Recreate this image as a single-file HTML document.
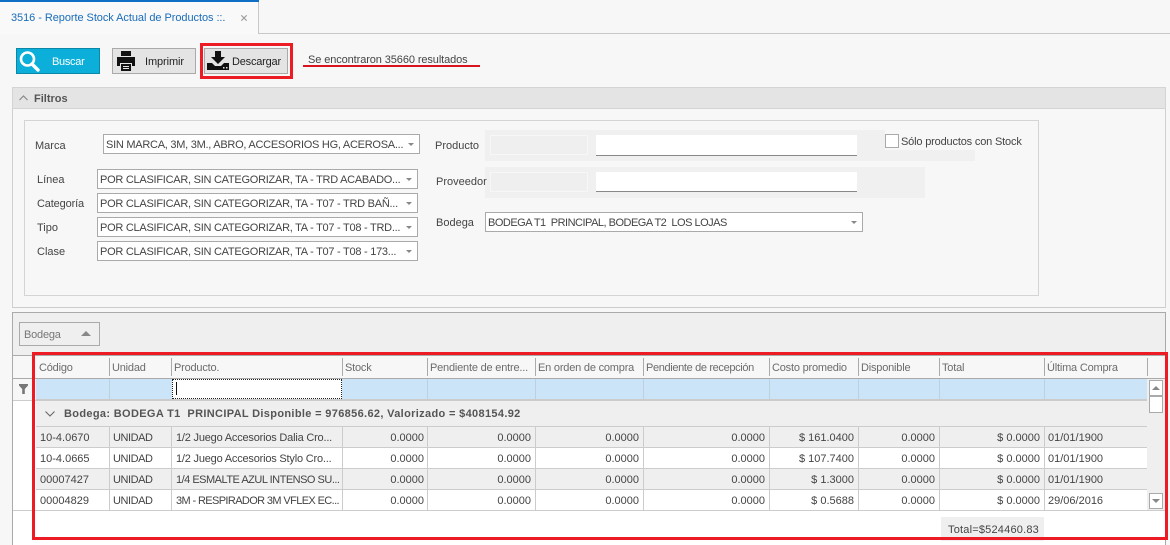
<!DOCTYPE html>
<html lang="es"><head><meta charset="utf-8"><title>Reporte Stock</title>
<style>
html,body{margin:0;padding:0}
body{width:1170px;height:545px;position:relative;overflow:hidden;background:#f7f7f7;font:11px/16px "Liberation Sans",sans-serif;color:#444}
div,span.t,svg{position:absolute;box-sizing:border-box}
.t{white-space:pre}
.combo{background:#fff;border:1px solid #aaa;height:20px;padding:2px 0 0 2px;white-space:pre;overflow:hidden;color:#444;letter-spacing:-.26px}
.combo:after{content:"";position:absolute;right:5px;top:8px;border:3.5px solid transparent;border-top:3px solid #888;border-bottom:0}
.h{top:360px;color:#6c6c6c;white-space:nowrap;letter-spacing:-.2px}
.v{width:1px;background:#aaa;top:358px;height:18px}
.f{width:1px;background:#bcd0e0;top:379px;height:20px}
.c{width:1px;background:#ccc;top:427px;height:84px}
.hl{height:1px;background:#ccc;left:36px;width:1111px}
.row{height:20px;left:36px;width:1111px}
.g{background:#efefef}
.tx{white-space:nowrap;height:14px}
.r{text-align:right;white-space:nowrap;height:14px}
.u{letter-spacing:-.45px}
</style></head><body>

<!-- tab -->
<div style="left:0;top:0;width:259px;height:34px;border-right:1px solid #c8c8c8;background:#f9f9f9"></div>
<div style="left:0;top:0;width:259px;height:2px;background:#0f6fc6"></div>
<div style="left:258px;top:33px;width:912px;height:1px;background:#c8c8c8"></div>
<div class="t" style="left:11px;top:10px;color:#1a6dbb;letter-spacing:-.06px">3516 - Reporte Stock Actual de Productos ::.</div>
<svg style="left:241px;top:15px" width="6" height="6" viewBox="0 0 6 6"><path d="M.3.3l5.400 5.400M5.700.3L.3 5.700" stroke="#999" stroke-width="1.100"/></svg>

<!-- buttons -->
<div style="left:16px;top:48px;width:84px;height:26px;background:#0cafd9;border:1px solid #0b87a8"></div>
<svg style="left:18px;top:50px" width="24" height="22" viewBox="0 0 24 22"><circle cx="9.500" cy="9" r="6.500" fill="none" stroke="#fff" stroke-width="2.600"/><path d="M14 14l6 6" stroke="#fff" stroke-width="3.400" stroke-linecap="round"/></svg>
<div class="t" style="left:52px;top:54px;color:#fff;letter-spacing:-.3px">Buscar</div>

<div style="left:112px;top:48px;width:84px;height:26px;background:#e4e4e4;border:1px solid #aaa"></div>
<svg style="left:116px;top:50px" width="20" height="22" viewBox="0 0 20 22"><path d="M5 1h10v5H5z" fill="#111"/><path d="M1 7h18v9h-3v-3H4v3H1z" fill="#111"/><path d="M5 14h10v7H5z" fill="#111"/><path d="M7 16h6v1H7zM7 18h6v1H7z" fill="#e4e4e4"/></svg>
<div class="t" style="left:145px;top:54px;color:#222;letter-spacing:-.1px">Imprimir</div>

<div style="left:200px;top:43px;width:93px;height:36px;border:3px solid #ed1c24"></div>
<div style="left:204px;top:48px;width:84px;height:26px;background:#e4e4e4;border:1px solid #aaa"></div>
<svg style="left:207px;top:51px" width="22" height="20" viewBox="0 0 22 20"><path d="M8 0h6v6h4l-7 7-7-7h4z" fill="#111"/><path d="M0 12h5l3 3h6l3-3h5v7H0z" fill="#111"/><path d="M16 16h1.500v1.500H16zM19 16h1.500v1.500H19z" fill="#e4e4e4"/></svg>
<div class="t" style="left:232px;top:54px;color:#222;letter-spacing:-.2px">Descargar</div>

<div class="t" style="left:308px;top:52px;letter-spacing:-.1px">Se encontraron 35660 resultados</div>
<div style="left:303px;top:65px;width:177px;height:2px;background:#d8141c"></div>

<!-- filtros -->
<div style="left:12px;top:87px;width:1154px;height:221px;border:1px solid #d0d0d0;border-top:0;border-bottom:1px solid #ccc"></div>
<div style="left:12px;top:87px;width:1154px;height:22px;background:#e4e4e4;border:1px solid #d4d4d4"></div>
<svg style="left:19px;top:95px" width="9" height="6" viewBox="0 0 9 6"><path d="M.5 5l4-4 4 4" fill="none" stroke="#888" stroke-width="1.200"/></svg>
<div class="t" style="left:34px;top:91px;font-weight:bold;color:#555">Filtros</div>

<div style="left:24px;top:120px;width:1015px;height:176px;border:1px solid #d4d4d4"></div>

<div class="t" style="left:35px;top:138px">Marca</div>
<div class="combo" style="left:103px;top:134px;width:317px">SIN MARCA, 3M, 3M., ABRO, ACCESORIOS HG, ACEROSA...</div>
<div class="t" style="left:37px;top:172px">Línea</div>
<div class="combo" style="left:97px;top:169px;width:321px">POR CLASIFICAR, SIN CATEGORIZAR, TA - TRD ACABADO...</div>
<div class="t" style="left:37px;top:196px;letter-spacing:-.15px">Categoría</div>
<div class="combo" style="left:97px;top:193px;width:321px">POR CLASIFICAR, SIN CATEGORIZAR, TA - T07 - TRD BAÑ...</div>
<div class="t" style="left:37px;top:220px">Tipo</div>
<div class="combo" style="left:97px;top:217px;width:321px">POR CLASIFICAR, SIN CATEGORIZAR, TA - T07 - T08 - TRD...</div>
<div class="t" style="left:37px;top:244px">Clase</div>
<div class="combo" style="left:97px;top:241px;width:321px">POR CLASIFICAR, SIN CATEGORIZAR, TA - T07 - T08 - 173...</div>

<div style="left:485px;top:130px;width:490px;height:31px;background:#f0f0f0"></div>
<div style="left:490px;top:135px;width:98px;height:20px;background:#efefef;border:1px solid #f7f7f7"></div>
<div style="left:596px;top:135px;width:261px;height:21px;background:#fff;border-bottom:1px solid #888"></div>
<div style="left:885px;top:130px;width:90px;height:20px;background:#f7f7f7"></div>
<div style="left:885px;top:134px;width:14px;height:14px;background:#fff;border:1px solid #aaa"></div>
<div class="t" style="left:901px;top:134px;letter-spacing:-.17px">Sólo productos con Stock</div>
<div class="t" style="left:435px;top:138px">Producto</div>

<div style="left:485px;top:167px;width:440px;height:31px;background:#f0f0f0"></div>
<div style="left:490px;top:172px;width:98px;height:20px;background:#efefef;border:1px solid #f7f7f7"></div>
<div style="left:596px;top:172px;width:261px;height:20px;background:#fff;border-bottom:1px solid #888"></div>
<div class="t" style="left:436px;top:174px">Proveedor</div>

<div class="t" style="left:436px;top:215px">Bodega</div>
<div class="combo" style="left:485px;top:212px;width:378px;letter-spacing:-.5px">BODEGA T1  PRINCIPAL, BODEGA T2  LOS LOJAS</div>

<!-- grid panel -->
<div style="left:12px;top:312px;width:1154px;height:233px;background:#fff;border:1px solid #aaa;border-bottom:0"></div>
<div style="left:13px;top:313px;width:1152px;height:42px;background:#efefef"></div>
<div style="left:13px;top:355px;width:1152px;height:1px;background:#aaa"></div>
<div style="left:19px;top:322px;width:81px;height:24px;border:1px solid #aaa"></div>
<div class="t" style="left:24px;top:327px;color:#777;letter-spacing:-.2px">Bodega</div>
<div style="left:81px;top:331px;border:5px solid transparent;border-top:0;border-bottom:5px solid #888"></div>

<!-- header -->
<div style="left:13px;top:356px;width:1152px;height:23px;background:#f7f7f7"></div>
<div style="left:13px;top:378px;width:1152px;height:1px;background:#aaa"></div>
<div style="left:13px;top:379px;width:23px;height:21px;background:#f7f7f7"></div>
<div style="left:13px;top:400px;width:23px;height:1px;background:#ccc"></div>
<div style="left:13px;top:401px;width:23px;height:110px;background:#fff"></div>
<svg style="left:18px;top:384px" width="11" height="10" viewBox="0 0 11 10"><path d="M1 0h9v1.500L6.800 5v5H4.200V5L1 1.500z" fill="#777"/></svg>

<div class="h" style="left:39px">Código</div>
<div class="h" style="left:112px">Unidad</div>
<div class="h" style="left:174px">Producto.</div>
<div class="h" style="left:345px">Stock</div>
<div class="h" style="left:430px">Pendiente de entre...</div>
<div class="h" style="left:538px">En orden de compra</div>
<div class="h" style="left:646px;letter-spacing:-.35px">Pendiente de recepción</div>
<div class="h" style="left:772px">Costo promedio</div>
<div class="h" style="left:861px">Disponible</div>
<div class="h" style="left:942px">Total</div>
<div class="h" style="left:1047px">Última Compra</div>
<div class="v" style="left:109px"></div><div class="v" style="left:171px"></div><div class="v" style="left:342px"></div><div class="v" style="left:427px"></div><div class="v" style="left:535px"></div><div class="v" style="left:643px"></div><div class="v" style="left:769px"></div><div class="v" style="left:858px"></div><div class="v" style="left:939px"></div><div class="v" style="left:1044px"></div><div class="v" style="left:1147px"></div>

<!-- filter row -->
<div style="left:36px;top:379px;width:1111px;height:21px;background:#cce4f7"></div>
<div class="f" style="left:109px"></div><div class="f" style="left:427px"></div><div class="f" style="left:535px"></div><div class="f" style="left:643px"></div><div class="f" style="left:769px"></div><div class="f" style="left:858px"></div><div class="f" style="left:939px"></div><div class="f" style="left:1044px"></div>
<div style="left:172px;top:379px;width:170px;height:20px;background:#fff;border:1px dotted #222"></div>
<div style="left:176px;top:382px;width:1px;height:13px;background:#111"></div>
<div style="left:36px;top:399px;width:1111px;height:2px;background:#ccc"></div>

<!-- group -->
<div style="left:36px;top:401px;width:1111px;height:25px;background:#efefef"></div>
<svg style="left:45px;top:411px" width="10" height="6" viewBox="0 0 10 6"><path d="M.5.5L5 5 9.500.5" fill="none" stroke="#666" stroke-width="1.100"/></svg>
<div class="t" style="left:64px;top:406px;font-weight:bold;color:#555;letter-spacing:.34px">Bodega: BODEGA T1  PRINCIPAL Disponible = 976856.62, Valorizado = $408154.92</div>

<!-- rows -->
<div class="row g" style="top:427px"></div>
<div class="row" style="top:448px;background:#fff"></div>
<div class="row g" style="top:469px"></div>
<div class="row" style="top:490px;background:#fff"></div>
<div class="hl" style="top:426px"></div><div class="hl" style="top:447px"></div><div class="hl" style="top:468px"></div><div class="hl" style="top:489px"></div>
<div style="left:13px;top:510px;width:1152px;height:1px;background:#ccc"></div>
<div class="c" style="left:109px"></div><div class="c" style="left:171px"></div><div class="c" style="left:342px"></div><div class="c" style="left:427px"></div><div class="c" style="left:535px"></div><div class="c" style="left:643px"></div><div class="c" style="left:769px"></div><div class="c" style="left:858px"></div><div class="c" style="left:939px"></div><div class="c" style="left:1044px"></div>

<div class="tx" style="left:40px;top:430px">10-4.0670</div><div class="tx u" style="left:113px;top:430px">UNIDAD</div><div class="tx" style="left:176px;top:430px;letter-spacing:-.2px">1/2 Juego Accesorios Dalia Cro...</div>
<div class="tx" style="left:40px;top:451px">10-4.0665</div><div class="tx u" style="left:113px;top:451px">UNIDAD</div><div class="tx" style="left:176px;top:451px;letter-spacing:-.2px">1/2 Juego Accesorios Stylo Cro...</div>
<div class="tx" style="left:40px;top:472px">00007427</div><div class="tx u" style="left:113px;top:472px">UNIDAD</div><div class="tx" style="left:176px;top:472px;letter-spacing:-.5px">1/4 ESMALTE AZUL INTENSO SU...</div>
<div class="tx" style="left:40px;top:493px">00004829</div><div class="tx u" style="left:113px;top:493px">UNIDAD</div><div class="tx" style="left:176px;top:493px;letter-spacing:-.62px">3M - RESPIRADOR 3M VFLEX EC...</div>

<div class="r" style="left:343px;width:81px;top:430px">0.0000</div><div class="r" style="left:428px;width:103px;top:430px">0.0000</div><div class="r" style="left:536px;width:103px;top:430px">0.0000</div><div class="r" style="left:644px;width:121px;top:430px">0.0000</div><div class="r" style="left:770px;width:84px;top:430px">$ 161.0400</div><div class="r" style="left:859px;width:76px;top:430px">0.0000</div><div class="r" style="left:940px;width:100px;top:430px">$ 0.0000</div><div class="tx" style="left:1048px;top:430px">01/01/1900</div>
<div class="r" style="left:343px;width:81px;top:451px">0.0000</div><div class="r" style="left:428px;width:103px;top:451px">0.0000</div><div class="r" style="left:536px;width:103px;top:451px">0.0000</div><div class="r" style="left:644px;width:121px;top:451px">0.0000</div><div class="r" style="left:770px;width:84px;top:451px">$ 107.7400</div><div class="r" style="left:859px;width:76px;top:451px">0.0000</div><div class="r" style="left:940px;width:100px;top:451px">$ 0.0000</div><div class="tx" style="left:1048px;top:451px">01/01/1900</div>
<div class="r" style="left:343px;width:81px;top:472px">0.0000</div><div class="r" style="left:428px;width:103px;top:472px">0.0000</div><div class="r" style="left:536px;width:103px;top:472px">0.0000</div><div class="r" style="left:644px;width:121px;top:472px">0.0000</div><div class="r" style="left:770px;width:84px;top:472px">$ 1.3000</div><div class="r" style="left:859px;width:76px;top:472px">0.0000</div><div class="r" style="left:940px;width:100px;top:472px">$ 0.0000</div><div class="tx" style="left:1048px;top:472px">01/01/1900</div>
<div class="r" style="left:343px;width:81px;top:493px">0.0000</div><div class="r" style="left:428px;width:103px;top:493px">0.0000</div><div class="r" style="left:536px;width:103px;top:493px">0.0000</div><div class="r" style="left:644px;width:121px;top:493px">0.0000</div><div class="r" style="left:770px;width:84px;top:493px">$ 0.5688</div><div class="r" style="left:859px;width:76px;top:493px">0.0000</div><div class="r" style="left:940px;width:100px;top:493px">$ 0.0000</div><div class="tx" style="left:1048px;top:493px">29/06/2016</div>

<!-- scrollbar -->
<div style="left:1147px;top:379px;width:18px;height:131px;background:#efefef"></div>
<div style="left:1149px;top:380px;width:14px;height:16px;background:#fff;border:1px solid #aaa"></div>
<div style="left:1152px;top:386px;border:4px solid transparent;border-top:0;border-bottom:4px solid #888"></div>
<div style="left:1149px;top:396px;width:14px;height:17px;background:#fff;border:1px solid #aaa"></div>
<div style="left:1149px;top:493px;width:14px;height:16px;background:#fff;border:1px solid #aaa"></div>
<div style="left:1152px;top:499px;border:4px solid transparent;border-bottom:0;border-top:4px solid #888"></div>

<!-- total -->
<div style="left:941px;top:517px;width:103px;height:24px;background:#efefef"></div>
<div class="t" style="left:948px;top:522px;letter-spacing:.2px">Total=$524460.83</div>

<!-- red box -->
<div style="left:32px;top:352px;width:1136px;height:188px;border:3px solid #ed1c24"></div>
</body></html>
